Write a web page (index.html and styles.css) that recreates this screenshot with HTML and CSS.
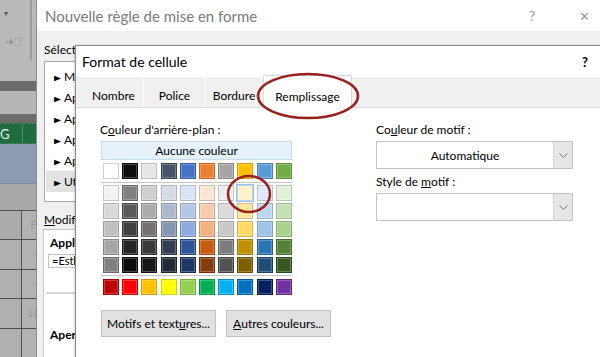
FILE: index.html
```html
<!DOCTYPE html>
<html lang="fr">
<head>
<meta charset="utf-8">
<title>Format de cellule</title>
<link rel="stylesheet" href="styles.css">
</head>
<body>
<div class="screen">
  <div class="excel">
    <div class="xl-ribbon">
      <span class="xl-caret">▾</span>
      <svg class="xl-icon" width="16" height="8" viewBox="0 0 16 8"><path d="M0 4h6M4 1.5l2.5 2.5L4 6.5" fill="none" stroke="#8a8a8a" stroke-width="1.2"/><rect x="9" y="0.5" width="6" height="7" fill="none" stroke="#9a9a9a" stroke-dasharray="1 1"/></svg>
    </div>
    <div class="xl-band xl-dark"></div>
    <div class="xl-band xl-mid"></div>
    <div class="xl-band xl-dark2"></div>
    <div class="xl-green"><span class="xl-g">G</span><span class="xl-g2"></span></div>
    <div class="xl-sel"></div>
    <div class="xl-head"></div>
    <div class="xl-row"><span class="xl-c1 xl-c1-hi"></span><span class="xl-c2">F</span></div>
    <div class="xl-row"><span class="xl-c1"></span><span class="xl-c2">-</span></div>
    <div class="xl-row"><span class="xl-c1"></span><span class="xl-c2">-</span></div>
    <div class="xl-row"><span class="xl-c1"></span><span class="xl-c2">1(</span></div>
    <div class="xl-row"><span class="xl-c1"></span><span class="xl-c2"></span></div>
  </div>

  <div class="dlg-outer">
    <div class="outer-title">
      <span class="outer-name">Nouvelle règle de mise en forme</span>
      <span class="outer-help">?</span>
      <span class="outer-close">✕</span>
    </div>
    <div class="outer-body">
      <div class="outer-label">Sélect</div>
      <ul class="rule-list">
        <li><span class="tri">►</span>Me</li>
        <li><span class="tri">►</span>Ap</li>
        <li><span class="tri">►</span>Ap</li>
        <li><span class="tri">►</span>Ap</li>
        <li><span class="tri">►</span>Ap</li>
        <li class="sel"><span class="tri">►</span>Ut</li>
      </ul>
      <div class="outer-label mod"><u>M</u>odif</div>
      <div class="desc-box">
        <div class="desc-bold">Appl</div>
        <div class="desc-input">=Estl</div>
        <div class="desc-sep"></div>
        <div class="desc-bold aper">Aper</div>
      </div>
    </div>
  </div>

  <div class="dlg-inner">
    <div class="inner-title">
      <span>Format de cellule</span>
      <span class="inner-help">?</span>
    </div>
    <div class="tabs">
      <span class="tab t1">Nombre</span>
      <span class="tab t2">Police</span>
      <span class="tab t3">Bordure</span>
      <span class="tab t4 active">Remplissage</span>
    </div>
    <div class="content">
      <div class="col-left">
        <div class="lbl">C<u>o</u>uleur d'arrière-plan :</div>
        <div class="no-color">Aucune couleur</div>
        <div class="swatches">
          <i style="background:#ffffff"></i><i style="background:#0d0d0d"></i><i style="background:#e7e6e6"></i><i style="background:#44546a"></i><i style="background:#4472c4"></i><i style="background:#ed7d31"></i><i style="background:#a5a5a5"></i><i style="background:#ffc000"></i><i style="background:#5b9bd5"></i><i style="background:#70ad47"></i>
        </div>
        <div class="sep"></div>
        <div class="swatches theme">
          <i style="background:#f2f2f2"></i><i style="background:#808080"></i><i style="background:#d0cece"></i><i style="background:#d6dce5"></i><i style="background:#dae3f3"></i><i style="background:#fbe5d6"></i><i style="background:#ededed"></i><i class="picked" style="background:#fff2cc"></i><i style="background:#deebf7"></i><i style="background:#e2f0d9"></i>
          <i style="background:#d9d9d9"></i><i style="background:#595959"></i><i style="background:#aeaaaa"></i><i style="background:#adb9ca"></i><i style="background:#b4c7e7"></i><i style="background:#f8cbad"></i><i style="background:#dbdbdb"></i><i style="background:#ffe699"></i><i style="background:#bdd7ee"></i><i style="background:#c5e0b4"></i>
          <i style="background:#bfbfbf"></i><i style="background:#404040"></i><i style="background:#767171"></i><i style="background:#8497b0"></i><i style="background:#8faadc"></i><i style="background:#f4b183"></i><i style="background:#c9c9c9"></i><i style="background:#ffd966"></i><i style="background:#9dc3e6"></i><i style="background:#a9d18e"></i>
          <i style="background:#a6a6a6"></i><i style="background:#262626"></i><i style="background:#3b3838"></i><i style="background:#333f50"></i><i style="background:#2f5597"></i><i style="background:#c55a11"></i><i style="background:#7c7c7c"></i><i style="background:#bf9000"></i><i style="background:#2e75b6"></i><i style="background:#548235"></i>
          <i style="background:#808080"></i><i style="background:#0d0d0d"></i><i style="background:#181717"></i><i style="background:#222a35"></i><i style="background:#203864"></i><i style="background:#843c0c"></i><i style="background:#525252"></i><i style="background:#7f6000"></i><i style="background:#1f4e79"></i><i style="background:#385723"></i>
        </div>
        <div class="sep sep2"></div>
        <div class="swatches std">
          <i style="background:#c00000"></i><i style="background:#ff0000"></i><i style="background:#ffc000"></i><i style="background:#ffff00"></i><i style="background:#92d050"></i><i style="background:#00b050"></i><i style="background:#00b0f0"></i><i style="background:#0070c0"></i><i style="background:#002060"></i><i style="background:#7030a0"></i>
        </div>
        <div class="btns">
          <span class="btn b1">Motifs et text<u>u</u>res...</span>
          <span class="btn b2"><u>A</u>utres couleurs...</span>
        </div>
      </div>
      <div class="col-right">
        <div class="lbl">Co<u>u</u>leur de motif :</div>
        <div class="combo">
          <span class="combo-val">Automatique</span>
          <span class="combo-btn"><svg width="9" height="5" viewBox="0 0 9 5"><path d="M0.5 0.5l4 4 4-4" fill="none" stroke="#7a7a7a" stroke-width="1"/></svg></span>
        </div>
        <div class="lbl lbl2">Style de <u>m</u>otif :</div>
        <div class="combo">
          <span class="combo-val"></span>
          <span class="combo-btn"><svg width="9" height="5" viewBox="0 0 9 5"><path d="M0.5 0.5l4 4 4-4" fill="none" stroke="#7a7a7a" stroke-width="1"/></svg></span>
        </div>
      </div>
    </div>
  </div>

  <svg class="marks" width="600" height="357" viewBox="0 0 600 357">
    <ellipse cx="308" cy="96" rx="50" ry="22" fill="none" stroke="#9b1f1f" stroke-width="2.5"/>
    <ellipse cx="249" cy="194" rx="21" ry="18" fill="none" stroke="#9b1f1f" stroke-width="2.5"/>
  </svg>
</div>
</body>
</html>
```

FILE: styles.css
```css
* { box-sizing: border-box; }
html, body { margin: 0; padding: 0; }
body {
  width: 600px;
  height: 357px;
  overflow: hidden;
  font-family: Lato, "Noto Sans", sans-serif;
  font-size: 12px;
  color: #000;
  background: #b4b4b4;
}
.screen {
  position: relative;
  width: 600px;
  height: 357px;
  overflow: hidden;
}

/* ---------- Excel background strip ---------- */
.excel {
  width: 37px;
  height: 357px;
  display: flex;
  flex-direction: column;
  background: #b2b2b2;
}
.xl-ribbon {
  height: 90px;
  background:
    linear-gradient(to right, transparent 30px, #9c9c9c 30px, #9c9c9c 32px, transparent 32px) no-repeat 0 0 / 100% 60px,
    #bababa;
  display: flex;
  flex-direction: column;
  padding: 8px 0 0 4px;
  gap: 20px;
}
.xl-caret { font-size: 8px; color: #555; line-height: 10px; }
.xl-icon { display: block; margin-left: 2px; }
.xl-band { flex: none; }
.xl-dark { height: 10px; background: #6c6c6c; }
.xl-mid { height: 23px; background: #b6b6b6; }
.xl-dark2 { height: 9px; background: #6c6c6c; }
.xl-green {
  height: 23px;
  background: #1f6c41;
  display: flex;
  align-items: center;
  border-top: 1px dotted #4b8a64;
  border-bottom: 1px dotted #4b8a64;
}
.xl-g { color: #e8f0ea; font-size: 13px; margin-left: 0; width: 22px; }
.xl-g2 { width: 1px; height: 100%; background: #4d8d66; }
.xl-sel { height: 45px; background: #8d9bb2; border-bottom: 1px solid #7d8aa0; }
.xl-head { height: 28px; background: #a9a9a9; }
.xl-row {
  height: 29.5px;
  flex: none;
  display: flex;
  border-top: 1px solid #4f4f4f;
}
.xl-c1 { width: 22px; border-right: 1px solid #555; background: #b0b0b0; }
.xl-c1-hi { background: #ababab; }
.xl-c2 { flex: 1; color: #9a9a9a; font-size: 12px; text-align: right; padding: 6px 0 0 0; }

/* ---------- outer dialog ---------- */
.dlg-outer {
  position: absolute;
  left: 36px;
  top: 0;
  width: 600px;
  height: 400px;
  border-left: 1px solid #8e8e8e;
  background: #f0f0f0;
}
.outer-title {
  height: 31px;
  background: #fff;
  display: flex;
  align-items: center;
  padding-left: 8px;
  color: #7a7a7a;
  font-size: 15px;
}
.outer-name { width: 484px; }
.outer-help { width: 50px; font-size: 14px; color: #9a9a9a; }
.outer-close { font-size: 13px; color: #9a9a9a; }
.outer-body {
  width: 39px;
  height: 330px;
  overflow: hidden;
  padding: 12px 0 0 7px;
}
.outer-label { height: 18px; line-height: 14px; white-space: nowrap; }
.rule-list {
  list-style: none;
  margin: 0;
  padding: 4px 0 2px 1px;
  width: 60px;
  height: 141px;
  background: #fff;
  border: 1px solid #a6a6a6;
}
.rule-list li {
  height: 21px;
  line-height: 21px;
  padding-left: 7px;
  white-space: nowrap;
}
.rule-list li.sel { background: #e3e3e3; }
.tri { font-size: 9px; margin-right: 2px; display: inline-block; transform: scaleX(1.3); }
.outer-label.mod { margin-top: 11px; height: 16px; }
.desc-box {
  width: 60px;
  height: 140px;
  margin-left: -1px;
  background: #fff;
  border: 1px solid #c8c8c8;
  padding: 6px 0 0 6px;
  white-space: nowrap;
}
.desc-bold { font-weight: bold; height: 16px; line-height: 14px; }
.desc-input {
  margin-top: 2px;
  margin-left: -2px;
  height: 14px;
  border: 1px solid #c4c4c4;
  font-size: 11px;
  line-height: 12px;
  padding-left: 3px;
}
.desc-sep { margin: 24px 0 0 -4px; border-top: 2px solid #d6d6d6; }
.aper { margin-top: 34px; }

/* ---------- inner dialog ---------- */
.dlg-inner {
  position: absolute;
  left: 75px;
  top: 45px;
  width: 560px;
  height: 340px;
  background: #fff;
  border: 1px solid #8a8a8a;
  box-shadow: -1px 0 2px rgba(0,0,0,0.15);
}
.inner-title {
  height: 31px;
  display: flex;
  align-items: center;
  padding-left: 6px;
  font-size: 14px;
}
.inner-title span:first-child { width: 500px; }
.inner-help { font-weight: bold; font-size: 13px; }
.tabs {
  height: 31px;
  background: #f0f0f0;
  border-bottom: 1px solid #dcdcdc;
  display: flex;
  padding-left: 8px;
}
.tab {
  display: flex;
  align-items: center;
  justify-content: center;
  padding-top: 6px;
  border-right: 1px solid #fbfbfb;
  font-size: 12px;
}
.t1 { width: 60px; }
.t2 { width: 62px; }
.t3 { width: 57px; }
.t4 { width: 89px; }
.tab.active {
  background: #fff;
  border: 1px solid #d9d9d9;
  border-bottom: none;
  margin-bottom: -1px;
  margin-top: -2px;
  padding-top: 8px;
}
.content {
  display: flex;
  padding: 15px 0 0 24px;
}
.col-left { width: 276px; }
.lbl { height: 18px; line-height: 14px; }
.no-color {
  width: 191px;
  height: 19px;
  margin-left: 1px;
  background: #e5f1fb;
  border: 1px solid #c5dcef;
  text-align: center;
  line-height: 17px;
}
.swatches {
  display: grid;
  grid-template-columns: repeat(10, 16px);
  column-gap: 3.2px;
  row-gap: 2px;
  margin: 3px 0 0 3px;
}
.swatches i {
  display: block;
  width: 16px;
  height: 16px;
  border: 1px solid rgba(0,0,0,0.18);
  box-shadow: inset 0 0 0 1px rgba(255,255,255,0.25);
}
.swatches i.picked { box-shadow: 0 0 0 1px #9cc5ea; border-color: #b9d3ea; }
.sep { width: 191px; margin: 3px 0 0 1px; border-top: 1px solid #c6c6c6; }
.swatches.theme { margin-top: 2px; }
.sep2 { margin-top: 2px; }
.swatches.std { margin-top: 3px; }
.btns { display: flex; gap: 10px; margin-top: 15px; margin-left: 1px; }
.btn {
  height: 27px;
  display: flex;
  align-items: center;
  justify-content: center;
  background: #e1e1e1;
  border: 1px solid #c2c2c2;
}
.b1 { width: 115px; }
.b2 { width: 105px; }
.col-right { width: 200px; }
.combo {
  width: 197px;
  height: 28px;
  display: flex;
  border: 1px solid #c3c3c3;
  background: #fff;
}
.combo-val { flex: 1; display: flex; align-items: center; justify-content: center; }
.combo-btn {
  width: 19px;
  background: #e6e6e6;
  border-left: 1px solid #d2d2d2;
  display: flex;
  align-items: center;
  justify-content: center;
}
.lbl2 { margin-top: 6px; height: 18px; }

/* ---------- annotations ---------- */
.marks {
  position: absolute;
  left: 0;
  top: 0;
  pointer-events: none;
}
```
